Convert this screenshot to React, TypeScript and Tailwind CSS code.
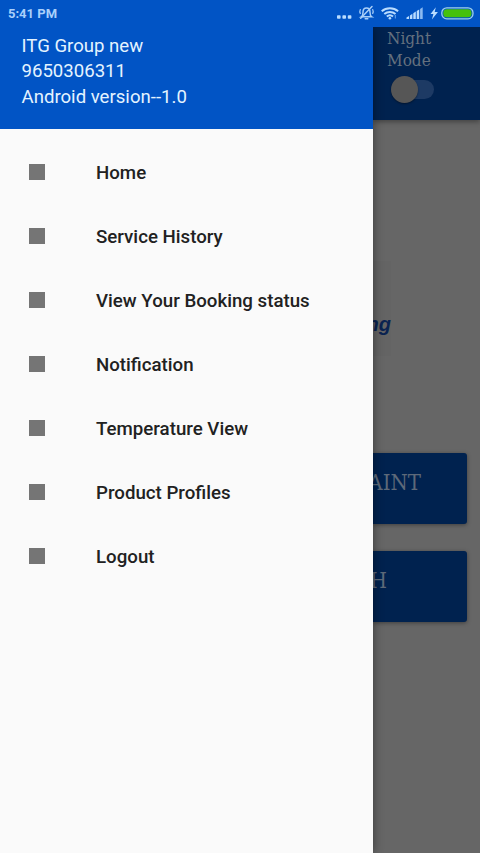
import React from 'react'

const menuItems = [
  'Home',
  'Service History',
  'View Your Booking status',
  'Notification',
  'Temperature View',
  'Product Profiles',
  'Logout',
];

const StatusIcons = () => {
  return (
    <svg width="144" height="27" viewBox="336 0 144 27" fill="none">
      <g fill="#b9dcff">
        <rect x="337" y="15.200" width="3.600" height="3.600" rx=".8" />
        <rect x="342.400" y="15.200" width="3.600" height="3.600" rx=".8" />
        <rect x="347.800" y="15.200" width="3.600" height="3.600" rx=".8" />
      </g>
      {/* muted bell */}
      <g stroke="#a9cff8" strokeWidth="1.500" strokeLinecap="round">
        <path d="M361.300 16.800c1.300-.8 1.700-2.200 1.700-4.600 0-2.600 1.200-4.200 3.500-4.200s3.500 1.600 3.500 4.200c0 2.400.4 3.800 1.700 4.600z" />
        <path d="M365.200 18.700h2.600M372 6.500 360.700 18.300" />
        <path d="M360.300 9.500c-.6 1.300-.6 2.700 0 4M372.700 9.500c.6 1.300.6 2.700 0 4" strokeWidth="1.200" />
      </g>
      {/* wifi */}
      <g stroke="#b9dcff" strokeWidth="2">
        <path d="M381.700 11.200c4.600-4 11.800-4 16.400 0" />
        <path d="M384.300 14c3.200-2.700 8-2.700 11.200 0" />
        <path d="M386.800 16.500c1.800-1.500 4.400-1.500 6.200 0" />
      </g>
      <circle cx="389.900" cy="18.200" r="1.300" fill="#b9dcff" />
      <path d="M395.300 15v3.500" stroke="#6aa5ec" />
      {/* signal */}
      <g fill="#b9dcff">
        <path d="M406.500 19v-1.500l2.500-1.500v3z" />
        <path d="M409.900 19v-3.600l2.500-1.600v5.200z" />
        <path d="M413.300 19v-5.800l2.500-1.600v7.400z" />
        <path d="M416.700 19v-8l2.500-1.600v9.600z" />
        <path d="M420.100 19v-10.100l2.600-1.600v11.700z" opacity=".75" />
        <path d="M435.800 7.300 430.500 14h2.900L431.900 19.500l6-7.500h-3.200z" />
      </g>
      <rect x="441.800" y="7.800" width="31.200" height="11" rx="5" stroke="#9fd0ea" strokeWidth="1.300" />
      <rect x="443.300" y="9.300" width="28.200" height="8" rx="3.600" fill="#45c10c" />
    </svg>
  )
}

const StatusBar = () => {
  return (
    <div className="z-20 flex h-[27px] shrink-0 items-center justify-between bg-[#0154c5] pl-2">
      <span className="text-[13px] font-bold leading-[27px] text-[#a9d0fb]">5:41 PM</span>
      <StatusIcons />
    </div>
  )
}

const Drawer = () => {
  return (
    <aside className="z-10 flex w-[373px] shrink-0 flex-col bg-[#fafafa] shadow-[0_0_10px_rgba(0,0,0,0.45)]">
      <div className="h-[102px] bg-[#0154c5] pl-[21.500px] pt-[7px] text-[18.600px] leading-[25.400px] text-[#e4f3ff]">
        <p>ITG Group new</p>
        <p>9650306311</p>
        <p>Android version--1.0</p>
      </div>
      <nav className="pt-[11px]">
        {menuItems.map((item) => (
          <a key={item} className="flex h-16 items-center">
            <span className="ml-[29px] h-4 w-4 bg-[#757575]" />
            <span className="ml-[51px] pt-[3px] text-[18.700px] font-medium text-[#212121]">{item}</span>
          </a>
        ))}
      </nav>
    </aside>
  )
}

interface ActionButtonProps {
  label: string;
  className: string;
}

const ActionButton = ({label, className}: ActionButtonProps) => {
  return (
    <div className={`mr-[13px] flex h-[71px] justify-end rounded-r-[3px] bg-[#00224f] pt-[14px] shadow-[0_1px_4px_rgba(0,0,0,0.4)] ${className}`}>
      <span className="whitespace-nowrap font-['DejaVu_Serif_Condensed','DejaVu_Serif',serif] text-[22px] leading-8 text-[#5d6979] [font-stretch:condensed]">
        {label}
      </span>
    </div>
  )
}

// the page behind the drawer, already dimmed by the scrim
const HomePage = () => {
  return (
    <main className="flex min-w-0 flex-1 flex-col bg-[#666666]">
      <div className="h-[93px] shrink-0 bg-[#00224f] pl-[14px] shadow-[0_2px_5px_rgba(0,0,0,0.35)]">
        <p className="font-['DejaVu_Serif_Condensed','DejaVu_Serif',serif] text-[17px] leading-[22px] text-[#64707e] [font-stretch:condensed]">
          Night<br />Mode
        </p>
        <div className="ml-1 mt-[5px] flex h-[27px] items-center">
          <span className="z-[1] h-[27px] w-[27px] rounded-full bg-[#565656] shadow-[0_1px_2px_rgba(0,0,0,0.4)]" />
          <span className="-ml-[15px] h-[19px] w-[31px] rounded-full bg-[#1d3a64]" />
        </div>
      </div>
      <div className="mt-[141px] h-[95px] w-[18px] bg-[#646464] pt-[51px]">
        <p className="flex justify-end font-['Liberation_Sans',sans-serif] text-[20px] font-bold italic leading-6 text-[#0a2351]">
          ng
        </p>
      </div>
      <div className="mt-[97px] flex flex-col gap-[27px]">
        <ActionButton label="AINT" className="pr-[46px]" />
        <ActionButton label="H" className="pr-[80px]" />
      </div>
    </main>
  )
}

const App = () => {
  return (
    <div className="flex h-[853px] w-[480px] flex-col overflow-hidden font-[Roboto,sans-serif]">
      <StatusBar />
      <div className="flex min-h-0 flex-1">
        <Drawer />
        <HomePage />
      </div>
    </div>
  )
}

export default App
